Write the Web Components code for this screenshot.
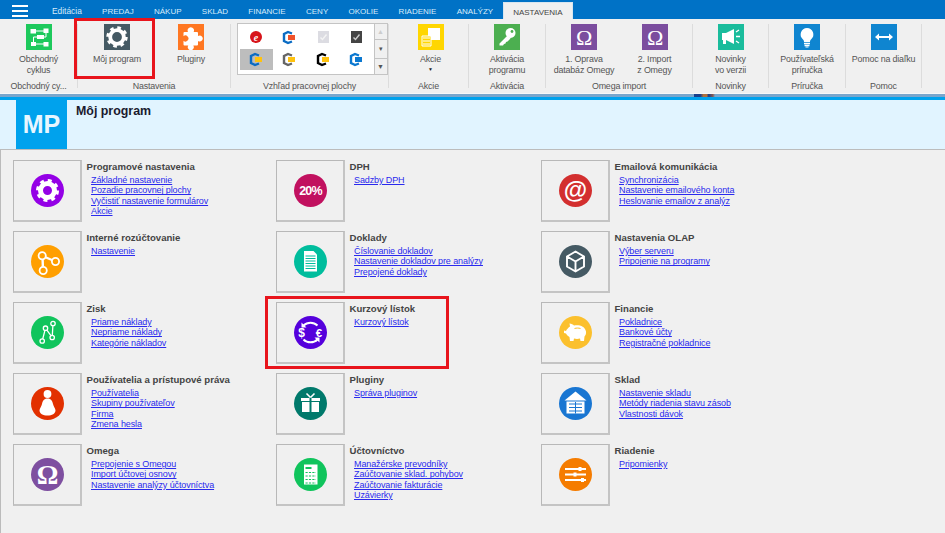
<!DOCTYPE html>
<html lang="sk"><head><meta charset="utf-8"><title>Môj program</title>
<style>
html,body{margin:0;height:100%;overflow:hidden;background:#f0f0f0;font-family:"Liberation Sans",Arial,sans-serif}
body{width:945px;height:533px;position:relative}
svg{display:block}
</style></head><body>
<template id="t-tabs"><style>
:host{display:flex;height:19px;background:#0072c6;align-items:stretch;box-sizing:border-box}
.burger{width:16px;margin:0 24px 0 12px;display:flex;flex-direction:column;gap:3px;padding-top:5px}
.burger i{display:block;height:2px;background:#fff;flex:none}
.tabs{display:flex;gap:20.3px;font-size:8px;align-items:center;color:#d8ecfa;height:19px}
::slotted(span){display:block;white-space:nowrap;padding-top:3px}
::slotted(span.first){font-size:8.4px}
::slotted(span.on){background:#f0f0f0;color:#444;padding:5px 9px 0;margin:2px 0 0 -10.300px;height:17px;box-sizing:border-box;border:1px solid #d8e6f0;border-bottom:0}
</style><div class="burger"><i></i><i></i><i></i></div><div class="tabs"><slot></slot></div></template>

<template id="t-ribbon"><style>
:host{display:flex;height:74px;background:#f0f0f0;box-sizing:border-box;padding-top:5px}
</style><slot></slot></template>

<template id="t-group"><style>
:host{display:flex;flex-direction:column;box-sizing:border-box;height:64px;border-right:1px solid #dcdcdc;flex:none}
.items{flex:1;display:flex;justify-content:center;min-height:0}
.label{height:13px;line-height:13px;margin-bottom:-5px;text-align:center;font-size:8.9px;letter-spacing:-.17px;color:#555;white-space:nowrap}
</style><div class="items"><slot></slot></div><div class="label"></div></template>

<template id="t-tool"><style>
:host{display:flex;flex-direction:column;align-items:center;flex:none;font-size:8.9px;letter-spacing:-.17px;line-height:10.6px;color:#555;text-align:center}
.ic{height:26px;margin-bottom:4px}
.tx{white-space:pre-line}
::slotted(span.caret){display:block;font-size:5px;line-height:8px;color:#222}
</style><div class="ic"><slot name="icon"></slot></div><div class="tx"><slot></slot></div></template>

<template id="t-gallery"><style>
:host{display:flex;width:151px;height:52px;margin:-1px 0 0 5px;border:1px solid #c4c4c4;background:#fff;box-sizing:border-box;flex:none}
.g{flex:1;display:grid;grid-template-columns:repeat(4,33.5px);grid-auto-rows:21.5px;padding:3px 0 0 2px;align-content:start;box-sizing:border-box}
.s{width:12px;display:flex;flex-direction:column;border-left:1px solid #c4c4c4;background:#f0f0f0}
.s div{flex:16;border-bottom:1px solid #c4c4c4;display:flex;align-items:center;justify-content:center;color:#555;font-size:7px}
.s div:nth-child(2){flex:18}
.s div:last-child{border-bottom:0}
</style><div class="g"><slot></slot></div><div class="s"><div style="color:#ccc">▲</div><div>▾</div><div>▼</div></div></template>

<template id="t-header"><style>
:host{display:block}
.hi{height:1px;background:#f8f8f8}
.strip{height:3px;background:#7aa6cc;display:flex}
.strip i{display:block;margin-left:694px;width:21px;background:linear-gradient(90deg,#1a3f8a,#1a3f8a 30%,#b0703c 45%,#b0703c 60%,#1a3f8a 70%,#8a5a50 90%,#7aa6cc)}
.blue{height:3px;background:#00a2ed}
.main{height:49px;background:#e1f4ff;border-bottom:1px solid #bcbcbc;display:flex;padding-left:16px}
.mp{width:51px;background:#00a2ed;color:#e8f6ff;font:bold 25px/1 "Liberation Sans",Arial,sans-serif;display:flex;align-items:flex-end;justify-content:center;padding-bottom:12px;box-sizing:border-box}
.t{font:bold 12.4px "Liberation Sans",Arial,sans-serif;color:#1a1a2e;margin:4px 0 0 9px}
</style><div class="hi"></div><div class="strip"><i></i></div><div class="blue"></div><div class="main"><div class="mp">MP</div><div class="t">Môj program</div></div></template>

<template id="t-grid"><style>
:host{display:grid;grid-template-columns:263px 265px 1fr;grid-auto-flow:column;grid-template-rows:repeat(5,71px);padding:10px 0 0 12px;border-left:1px solid #bbb;box-sizing:border-box;height:383px;background:#f0f0f0}
</style><slot></slot></template>

<template id="t-card"><style>
:host{display:flex;align-items:flex-start}
.box{width:69px;height:62px;box-sizing:border-box;border:1px solid #b8b8b8;border-right:2px solid #c4c4c4;border-bottom:2px solid #c4c4c4;display:flex;align-items:center;justify-content:center;flex:none}
.body{margin-left:4.5px;padding-top:1px}
.h{font:bold 9.6px/11px "Liberation Sans",Arial,sans-serif;color:#444;white-space:nowrap;margin-bottom:3px}
.l{margin-left:4.5px}
::slotted(a){display:block;font:9px/10.4px "Liberation Sans",Arial,sans-serif;letter-spacing:-.1px;color:#2a2aee;text-decoration:underline;white-space:nowrap}
</style><div class="box"><slot name="icon"></slot></div><div class="body"><div class="h"></div><div class="l"><slot></slot></div></div></template>

<template id="t-mark"><style>
:host{position:absolute;box-sizing:border-box;border:3px solid #e8141c;pointer-events:none}
</style></template>

<rs-tabs><span class="first">Editácia</span><span>PREDAJ</span><span>NÁKUP</span><span>SKLAD</span><span>FINANCIE</span><span>CENY</span><span>OKOLIE</span><span>RIADENIE</span><span>ANALÝZY</span><span class="on">NASTAVENIA</span></rs-tabs>

<rs-ribbon>
<rs-group w="78" label="Obchodný cy..."><rs-tool w="76"><svg slot="icon" width="26" height="26" viewBox="0 0 26 26"><rect width="26" height="26" fill="#1dc95c"/><path d="M7 7h13M20 7v6H14M11 13H7.500v7h12" stroke="#fff" stroke-width="1" fill="none"/><g fill="#fff"><rect x="4.500" y="5" width="5.500" height="4.500"/><rect x="17.500" y="4.500" width="5" height="4.500"/><rect x="11" y="11" width="7" height="4"/><rect x="5" y="18" width="5" height="4"/><rect x="17.500" y="18" width="5" height="4.500"/></g></svg>Obchodný
cyklus</rs-tool></rs-group>

<rs-group w="153" pr="4" label="Nastavenia"><rs-tool w="78"><svg slot="icon" width="26" height="26" viewBox="0 0 26 26"><rect width="26" height="26" fill="#455a64"/><circle cx="13" cy="13" r="9" fill="none" stroke="#fff" stroke-width="3.4" stroke-dasharray="3.5 3.57"/><circle cx="13" cy="13" r="6.800" fill="none" stroke="#fff" stroke-width="3.800"/></svg>Môj program</rs-tool><rs-tool w="70"><svg slot="icon" width="26" height="26" viewBox="0 0 26 26"><rect width="26" height="26" fill="#ff7722"/><path d="M10 8H6.500a1 1 0 0 0-1 1v3.200a3 3 0 1 1 0 4.600V20.500a1 1 0 0 0 1 1h3.800a3 3 0 1 0 5 0H19a1 1 0 0 0 1-1v-3.500a3 3 0 1 0 0-5V9a1 1 0 0 0-1-1h-3.400a3.200 3.200 0 1 0-5.600 0z" fill="#fff"/></svg>Pluginy</rs-tool></rs-group>

<rs-group w="158" label="Vzhľad pracovnej plochy"><rs-gallery>
<svg width="32" height="21" viewBox="0 0 32 21"><circle cx="16" cy="10" r="6" fill="#d7141a"/><text x="16" y="13.500" text-anchor="middle" font-size="10" font-style="italic" font-weight="bold" fill="#fff" font-family="Liberation Serif">e</text></svg>
<rs-off color="#0b6cc4" accent="#f0522a"></rs-off>
<svg width="32" height="21" viewBox="0 0 32 21"><rect x="11" y="4" width="11" height="12" fill="#dcdce2"/><path d="M13.500 10.500l2 2 4-5" stroke="#f4f4f4" fill="none" stroke-width="1.400"/></svg>
<svg width="32" height="21" viewBox="0 0 32 21"><rect x="11" y="4" width="11" height="12" fill="#444"/><path d="M13.500 10.500l2 2 4-5" stroke="#ccc" fill="none" stroke-width="1.400"/></svg>
<div style="background:#bdbdbd;height:21px;width:33px"><rs-off color="#0b6cc4" accent="#ffc20e"></rs-off></div>
<rs-off color="#666" accent="#ffc20e"></rs-off>
<rs-off color="#000" accent="#ffc20e"></rs-off>
<rs-off color="#0b78d0" accent="#0b78d0"></rs-off>
</rs-gallery></rs-group>

<rs-group w="80" pl="4" label="Akcie"><rs-tool w="60"><svg slot="icon" width="26" height="26" viewBox="0 0 26 26"><rect width="26" height="26" fill="#ffd600"/><rect x="10" y="4" width="12" height="12" fill="#fff"/><path d="M4 12h9v10H4z" fill="#ffd600" stroke="#fff" stroke-width="1"/><path d="M5 14h7M5 17h7M5 20h7" stroke="#fff"/></svg>Akcie<span class="caret">▼</span></rs-tool></rs-group>

<rs-group w="77" label="Aktivácia"><rs-tool w="70"><svg slot="icon" width="26" height="26" viewBox="0 0 26 26"><rect width="26" height="26" fill="#4caf50"/><circle cx="16.500" cy="9" r="5" fill="#fff"/><circle cx="18" cy="7.500" r="1.400" fill="#4caf50"/><path d="M14 11L5.500 19.500v2h3.500l1-1.500 1.500-.500.500-1.500 1.500-.500 3-3z" fill="#fff"/></svg>Aktivácia
programu</rs-tool></rs-group>

<rs-group w="147" pr="5" label="Omega import"><rs-tool w="76"><svg slot="icon" width="26" height="26" viewBox="0 0 26 26"><rect width="26" height="26" fill="#7b4d9e"/><text x="13" y="21" text-anchor="middle" font-size="22" fill="#fff" font-family="Liberation Serif">Ω</text></svg>1. Oprava
databáz Omegy</rs-tool><rs-tool w="65"><svg slot="icon" width="26" height="26" viewBox="0 0 26 26"><rect width="26" height="26" fill="#7b4d9e"/><text x="13" y="21" text-anchor="middle" font-size="22" fill="#fff" font-family="Liberation Serif">Ω</text></svg>2. Import
z Omegy</rs-tool></rs-group>

<rs-group w="76" label="Novinky"><rs-tool w="70"><svg slot="icon" width="26" height="26" viewBox="0 0 26 26"><rect width="26" height="26" fill="#1abc9c"/><path d="M4 9h4l8-4v15l-8-4H8v4H5v-4H4z" fill="#fff"/><path d="M18 8l3-2M18 12.500h4M18 17l3 2" stroke="#fff" stroke-width="1.300"/></svg>Novinky
vo verzii</rs-tool></rs-group>

<rs-group w="77" label="Príručka"><rs-tool w="70"><svg slot="icon" width="26" height="26" viewBox="0 0 26 26"><rect width="26" height="26" fill="#0f85d0"/><path d="M13 4a6.500 6.500 0 0 0-4 11.500c.8.700 1 1.500 1 2.500h6c0-1 .2-1.800 1-2.500A6.500 6.500 0 0 0 13 4z" fill="#fff"/><path d="M10 19.500h6M10.500 21.500h5" stroke="#fff" stroke-width="1.300"/><path d="M11.500 23h3" stroke="#fff"/></svg>Používateľská
príručka</rs-tool></rs-group>

<rs-group w="76" label="Pomoc"><rs-tool w="74"><svg slot="icon" width="26" height="26" viewBox="0 0 26 26"><rect width="26" height="26" fill="#0f85d0"/><path d="M7 13h12" stroke="#fff" stroke-width="2"/><path d="M8 9.500L4 13l4 3.500zM18 9.500l4 3.500-4 3.500z" fill="#fff"/></svg>Pomoc na diaľku</rs-tool></rs-group>
</rs-ribbon>

<rs-header></rs-header>

<rs-grid>
<rs-card title="Programové nastavenia"><svg slot="icon" width="33" height="33" viewBox="0 0 33 33"><circle cx="16.500" cy="16.500" r="16.500" fill="#9400e6"/><circle cx="16.500" cy="16.500" r="10" fill="none" stroke="#fff" stroke-width="3" stroke-dasharray="3.900 3.950"/><circle cx="16.500" cy="16.500" r="7" fill="none" stroke="#fff" stroke-width="5"/></svg><a href="#">Základné nastavenie</a><a href="#">Pozadie pracovnej plochy</a><a href="#">Vyčistiť nastavenie formulárov</a><a href="#">Akcie</a></rs-card>

<rs-card title="Interné rozúčtovanie"><svg slot="icon" width="33" height="33" viewBox="0 0 33 33"><circle cx="16.500" cy="16.500" r="16.500" fill="#ff9f00"/><path d="M11.500 11L24.500 16.500M11.500 11L12 25.500" stroke="#fff" stroke-width="2.400"/><g fill="#ff9f00" stroke="#fff" stroke-width="1.800"><circle cx="11.200" cy="10.800" r="3.600"/><circle cx="24.500" cy="16.500" r="3.600"/><circle cx="12.200" cy="25.500" r="3.600"/></g></svg><a href="#">Nastavenie</a></rs-card>

<rs-card title="Zisk"><svg slot="icon" width="33" height="33" viewBox="0 0 33 33"><circle cx="16.500" cy="16.500" r="16.500" fill="#10c45c"/><path d="M11.200 25L14.500 12.200 21.200 21.500 22 7.500" fill="none" stroke="#fff" stroke-width="1.300"/><g fill="#10c45c" stroke="#fff" stroke-width="1.300"><circle cx="22" cy="7.500" r="2.200"/><circle cx="14.500" cy="12.200" r="2.200"/><circle cx="21.200" cy="21.500" r="2.200"/><circle cx="11.200" cy="25" r="2.200"/></g></svg><a href="#">Priame náklady</a><a href="#">Nepriame náklady</a><a href="#">Kategórie nákladov</a></rs-card>

<rs-card title="Používatelia a prístupové práva"><svg slot="icon" width="33" height="33" viewBox="0 0 33 33"><circle cx="16.500" cy="16.500" r="16.500" fill="#e23000"/><circle cx="16.500" cy="7" r="3.900" fill="#fff"/><path d="M16.500 11.500c-3.600 0-5 2.500-5.500 5.500-.5 2.500-2.500 4.500-2.500 6.500 0 3 3.500 5 8 5s8-2 8-5c0-2-2-4-2.500-6.500-.5-3-1.900-5.500-5.500-5.500z" fill="#fff"/></svg><a href="#">Používatelia</a><a href="#">Skupiny používateľov</a><a href="#">Firma</a><a href="#">Zmena hesla</a></rs-card>

<rs-card title="Omega"><svg slot="icon" width="33" height="33" viewBox="0 0 33 33"><circle cx="16.500" cy="16.500" r="16.500" fill="#7e4fa0"/><text x="16.500" y="25.500" text-anchor="middle" font-size="27" font-weight="bold" fill="#fff" font-family="Liberation Serif">Ω</text></svg><a href="#">Prepojenie s Omegou</a><a href="#">Import účtovej osnovy</a><a href="#">Nastavenie analýzy účtovníctva</a></rs-card>

<rs-card title="DPH"><svg slot="icon" width="33" height="33" viewBox="0 0 33 33"><circle cx="16.500" cy="16.500" r="16.500" fill="#c1115f"/><text x="16.500" y="21" text-anchor="middle" font-size="12.500" font-weight="bold" letter-spacing="-.8" fill="#fff" font-family="Liberation Sans">20%</text></svg><a href="#">Sadzby DPH</a></rs-card>

<rs-card title="Doklady"><svg slot="icon" width="33" height="33" viewBox="0 0 33 33"><circle cx="16.500" cy="16.500" r="16.500" fill="#00bd9d"/><path d="M10 6h9.500l3.500 3.500V26.500H10z" fill="#fff"/><path d="M11.500 11h10M11.500 13.500h10M11.500 16h10M11.500 18.500h10M11.500 21h10M11.500 23.500h10" stroke="#00bd9d"/></svg><a href="#">Číslovanie dokladov</a><a href="#">Nastavenie dokladov pre analýzy</a><a href="#">Prepojené doklady</a></rs-card>

<rs-card title="Kurzový lístok"><svg slot="icon" width="33" height="33" viewBox="0 0 33 33"><circle cx="16.500" cy="16.500" r="16.500" fill="#5500dc"/><path d="M9.500 9.500A10 10 0 0 1 23.500 9.500M23.500 23.500A10 10 0 0 1 9.500 23.500" fill="none" stroke="#fff" stroke-width="2"/><path d="M7.500 6.500v5h5zM25.500 26.500v-5h-5z" fill="#fff"/><text x="7.500" y="21" text-anchor="middle" font-size="12" font-weight="bold" fill="#fff" font-family="Liberation Sans">$</text><text x="25" y="21" text-anchor="middle" font-size="11.500" font-weight="bold" fill="#fff" font-family="Liberation Sans">€</text></svg><a href="#">Kurzový lístok</a></rs-card>

<rs-card title="Pluginy"><svg slot="icon" width="33" height="33" viewBox="0 0 33 33"><circle cx="16.500" cy="16.500" r="16.500" fill="#00796b"/><path d="M7 11h8.500v3H7zM17.500 11H26v3h-8.500zM8 15h7.500v10H8zM17.500 15H25v10h-7.500z" fill="#fff"/><path d="M16.500 10.500L12.500 6.500M16.500 10.500L20.500 6.500" stroke="#fff" stroke-width="1.600"/></svg><a href="#">Správa pluginov</a></rs-card>

<rs-card title="Účtovníctvo"><svg slot="icon" width="33" height="33" viewBox="0 0 33 33"><circle cx="16.500" cy="16.500" r="16.500" fill="#10c45c"/><rect x="10" y="6.500" width="13.500" height="20" fill="#fff"/><path d="M11.500 9h6v2h-6z" fill="#10c45c"/><path d="M11.500 14.500h10.500M11.500 18h10.500M11.500 21.500h10.500M11.500 25h10.500" stroke="#10c45c" stroke-width="1.200" stroke-dasharray="2.200 1.200"/></svg><a href="#">Manažérske prevodníky</a><a href="#">Zaúčtovanie sklad. pohybov</a><a href="#">Zaúčtovanie fakturácie</a><a href="#">Uzávierky</a></rs-card>

<rs-card title="Emailová komunikácia"><svg slot="icon" width="33" height="33" viewBox="0 0 33 33"><circle cx="16.500" cy="16.500" r="16.500" fill="#d32f2f"/><text x="16.500" y="24" text-anchor="middle" font-size="24" font-weight="bold" fill="#fff" font-family="Liberation Sans">@</text></svg><a href="#">Synchronizácia</a><a href="#">Nastavenie emailového konta</a><a href="#">Heslovanie emailov z analýz</a></rs-card>

<rs-card title="Nastavenia OLAP"><svg slot="icon" width="33" height="33" viewBox="0 0 33 33"><circle cx="16.500" cy="16.500" r="16.500" fill="#455a64"/><path d="M16.500 6.500L25 11.500V21.500L16.500 26.500 8 21.500V11.500zM8.500 11.800L16.500 16.500 24.500 11.800M16.500 16.500V26" fill="none" stroke="#fff" stroke-width="1.900"/></svg><a href="#">Výber serveru</a><a href="#">Pripojenie na programy</a></rs-card>

<rs-card title="Financie"><svg slot="icon" width="33" height="33" viewBox="0 0 33 33"><circle cx="16.500" cy="16.500" r="16.500" fill="#fbc02d"/><path d="M5 14.500l2 .5c1-2 2.500-3.500 4-4.500l-.5-3c2 .1 3.500 1 4.500 2 5-1 11 .5 12 6 .3 2-.5 4-1.500 5l-.5 4.500h-3.500l-.5-2.500c-2 .5-4 .5-6 0l-.5 2.500H11l-.5-4c-1.500-.8-2.800-2-3.500-3.500l-2-.5z" fill="#fff"/><path d="M15.500 12.500c2-.6 4-.6 6 0" stroke="#fbc02d" fill="none"/></svg><a href="#">Pokladnice</a><a href="#">Bankové účty</a><a href="#">Registračné pokladnice</a></rs-card>

<rs-card title="Sklad"><svg slot="icon" width="33" height="33" viewBox="0 0 33 33"><circle cx="16.500" cy="16.500" r="16.500" fill="#1976d2"/><path d="M16.500 4.500L5.500 13.500H27.500z" fill="#fff"/><path d="M7.500 14.500h18V26.500h-18z" fill="#fff"/><path d="M10 17h13M10 20.500h13M10 24h13M16.500 15v11.500" stroke="#1976d2" stroke-width="1"/></svg><a href="#">Nastavenie skladu</a><a href="#">Metódy riadenia stavu zásob</a><a href="#">Vlastnosti dávok</a></rs-card>

<rs-card title="Riadenie"><svg slot="icon" width="33" height="33" viewBox="0 0 33 33"><circle cx="16.500" cy="16.500" r="16.500" fill="#f57c00"/><path d="M6 11h21M6 16.500h21M6 22h21" stroke="#fff" stroke-width="1.800"/><path d="M19.500 9h3v4h-3zM14.500 14.500h3v4h-3zM22 20h3v4h-3z" fill="#fff"/></svg><a href="#">Pripomienky</a></rs-card>
</rs-grid>

<rs-mark x="74" y="18" w="81" h="61"></rs-mark>
<rs-mark x="265" y="296" w="184" h="73"></rs-mark>

<script>
function sh(el,id){const r=el.attachShadow({mode:'open'});r.appendChild(document.getElementById(id).content.cloneNode(true));return r}
class Base extends HTMLElement{constructor(){super();this.r=sh(this,this.constructor.tpl)}}
class Tabs extends Base{static tpl='t-tabs'}
class Ribbon extends Base{static tpl='t-ribbon'}
class Group extends Base{static tpl='t-group';connectedCallback(){this.style.width=this.getAttribute('w')+'px';const i=this.r.querySelector('.items');i.style.paddingLeft=(this.getAttribute('pl')||0)+'px';i.style.paddingRight=(this.getAttribute('pr')||0)+'px';this.r.querySelector('.label').textContent=this.getAttribute('label')}}
class Tool extends Base{static tpl='t-tool';connectedCallback(){this.style.width=this.getAttribute('w')+'px'}}
class Gallery extends Base{static tpl='t-gallery'}
class Header extends Base{static tpl='t-header'}
class Grid extends Base{static tpl='t-grid'}
class Card extends Base{static tpl='t-card';connectedCallback(){this.r.querySelector('.h').textContent=this.getAttribute('title');this.removeAttribute('title')}}
class Mark extends Base{static tpl='t-mark';connectedCallback(){const s=this.style,a=n=>this.getAttribute(n)+'px';s.left=a('x');s.top=a('y');s.width=a('w');s.height=a('h')}}
class Off extends HTMLElement{constructor(){super();const r=this.attachShadow({mode:'open'});
r.innerHTML='<style>:host{display:block;width:32px;height:21px}svg{display:block}</style><svg width="32" height="21" viewBox="0 0 32 21"><path id="a" fill="none" stroke-width="2.400" d="M19 6.500L15 5l-4 2v7l4 2 4-1.500"/><rect id="b" x="15" y="8" width="7" height="5"/></svg>'}
connectedCallback(){const r=this.shadowRoot;r.getElementById('a').setAttribute('stroke',this.getAttribute('color'));r.getElementById('b').setAttribute('fill',this.getAttribute('accent'))}}
const d={'rs-tabs':Tabs,'rs-ribbon':Ribbon,'rs-group':Group,'rs-tool':Tool,'rs-gallery':Gallery,'rs-header':Header,'rs-grid':Grid,'rs-card':Card,'rs-mark':Mark,'rs-off':Off};
for(const k in d)customElements.define(k,d[k]);
</script>
</body></html>
